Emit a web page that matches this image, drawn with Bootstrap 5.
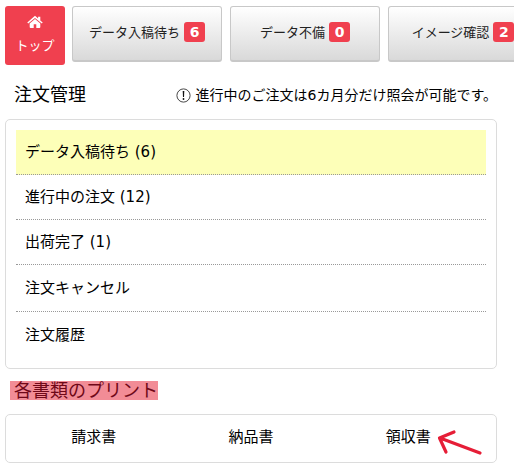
<!DOCTYPE html>
<html lang="ja">
<head>
<meta charset="utf-8">
<meta name="viewport" content="width=device-width, initial-scale=1">
<title>注文管理</title>
<link href="https://cdn.jsdelivr.net/npm/bootstrap@5.3.0/dist/css/bootstrap.min.css" rel="stylesheet">
<style>
body{font-family:"DejaVu Sans","Noto Sans CJK JP",sans-serif;font-weight:400;font-size:15px;line-height:24px;color:#000;background:#fff;overflow-x:hidden}
a{color:inherit;text-decoration:none}
.status-nav{padding:6px 0 0 5px;gap:8px}
.status-nav .btn{font-size:13px;line-height:20px;border-radius:3px}
.btn-top{width:60px;height:59px;background:#f0404f;color:#fff;margin-right:-1px;padding:9px 0 0;gap:7px}
.btn-top:hover{background:#d93444;color:#fff}
.btn-status{width:150px;height:56px;padding:0 0 2px;color:#222;border:1px solid #c8c8c8;border-bottom-width:2px;background:linear-gradient(#fff,#d9d9d9)}
.count{font-size:14px;line-height:20px;width:21px;padding:0;border-radius:3px;background:#f0404f}
.page-body{padding:0 17px 0 5px}
.section-title{font-size:18px;line-height:24px;font-weight:400;margin:0}
.title-row{padding:18px 0 12px 9px}
.notice{font-size:14px;line-height:24px}
.panel{border:1px solid #dcdcdc;border-radius:5px}
.order-list{padding:10px}
.order-list .list-group-item{padding:10px 9px;border:0;border-bottom:1px dotted #999;color:#000;line-height:24px;background:none}
.order-list .list-group-item.tall{padding-top:11px;padding-bottom:11px}
.order-list .list-group-item:last-child{border-bottom:0}
.order-list .list-group-item.current{background:#fdffb8}
.marked{background:#f28c96;color:#6f0818;line-height:19px;padding-left:4px}
.print-head{padding:12px 5px 14px}
.print-row{padding:10px 9px 13px}
.arrow{left:100%;top:0;margin-left:6px}
</style>
<script src="https://cdn.jsdelivr.net/npm/bootstrap@5.3.0/dist/js/bootstrap.bundle.min.js"></script>
</head>
<body>
<nav class="status-nav d-flex align-items-start overflow-hidden" aria-label="注文状況">
  <a href="#" class="btn btn-top border-0 flex-shrink-0 d-flex flex-column align-items-center">
    <svg width="16" height="14" viewBox="0 0 16 14" fill="#fff" class="flex-shrink-0" aria-hidden="true"><path d="M8 .8 11.1 3.5V1.7h2.2v3.8l2.4 2-.9 1.1L8 2.9 1.2 8.6.3 7.5z"/><path d="M8 4.1 13.3 8.5V12q0 .9-.9.9H9.3V9.2H6.7v3.7H3.6q-.9 0-.9-.9V8.5z"/></svg>
    <span>トップ</span>
  </a>
  <a href="#" class="btn btn-status flex-shrink-0 d-flex align-items-center justify-content-center gap-1"><span>データ入稿待ち</span><span class="badge count">6</span></a>
  <a href="#" class="btn btn-status flex-shrink-0 d-flex align-items-center justify-content-center gap-1"><span>データ不備</span><span class="badge count">0</span></a>
  <a href="#" class="btn btn-status flex-shrink-0 d-flex align-items-center justify-content-center gap-1"><span>イメージ確認</span><span class="badge count">2</span></a>
</nav>
<main class="page-body">
  <div class="title-row d-flex justify-content-between align-items-center">
    <h1 class="section-title text-nowrap">注文管理</h1>
    <div class="notice d-flex align-items-center text-nowrap">
      <svg width="15" height="15" viewBox="0 0 15 15" class="me-1" aria-hidden="true"><circle cx="7.5" cy="7.5" r="6.6" fill="none" stroke="#333" stroke-width=".9"/><path d="M6.7 3h1.6l-.3 6h-1z" fill="#111"/><circle cx="7.5" cy="11" r=".9" fill="#111"/></svg>
      <span>進行中のご注文は6カ月分だけ照会が可能です。</span>
    </div>
  </div>
  <div class="panel order-list">
    <div class="list-group list-group-flush">
      <a href="#" class="list-group-item current">データ入稿待ち (6)</a>
      <a href="#" class="list-group-item">進行中の注文 (12)</a>
      <a href="#" class="list-group-item">出荷完了 (1)</a>
      <a href="#" class="list-group-item tall">注文キャンセル</a>
      <a href="#" class="list-group-item tall">注文履歴</a>
    </div>
  </div>
  <div class="print-head d-flex">
    <h2 class="section-title marked">各書類のプリント</h2>
  </div>
  <div class="panel print-row">
    <div class="row g-0 text-center">
      <div class="col"><a href="#">請求書</a></div>
      <div class="col"><a href="#">納品書</a></div>
      <div class="col"><a href="#" class="position-relative d-inline-block">領収書<svg class="arrow position-absolute" width="46" height="32" viewBox="0 0 46 32" fill="none" stroke="#e61e37" stroke-width="3.2" stroke-linecap="round" stroke-linejoin="round" aria-hidden="true"><path d="M43 28 3 13M17 7 2.5 13 9 27"/></svg></a></div>
    </div>
  </div>
</main>
</body>
</html>
